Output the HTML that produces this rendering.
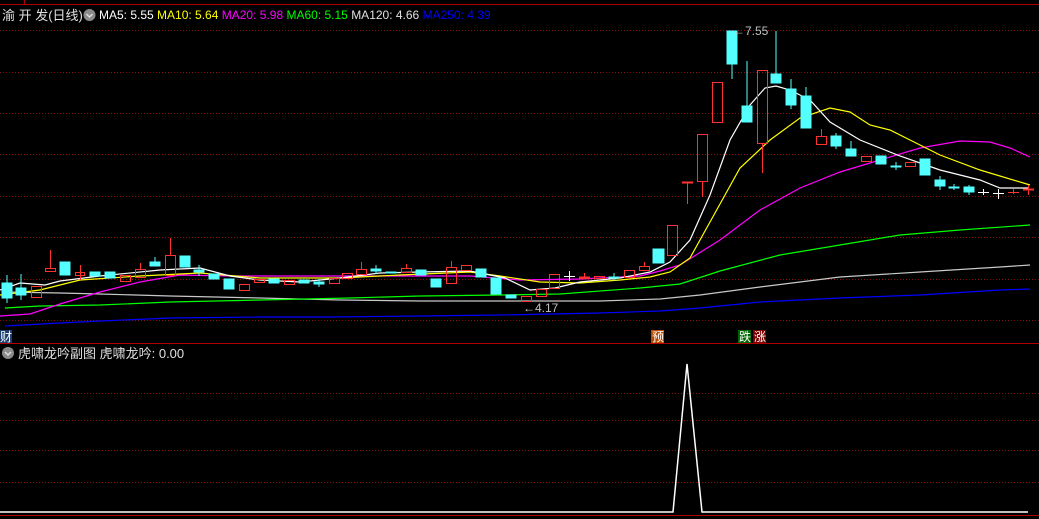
<!DOCTYPE html>
<html><head><meta charset="utf-8"><style>
html,body{margin:0;padding:0;background:#000;width:1039px;height:519px;overflow:hidden}
svg{display:block}
text{font-family:"Liberation Sans","Noto Sans CJK SC",sans-serif}
</style></head><body>
<svg width="1039" height="519" viewBox="0 0 1039 519" xmlns="http://www.w3.org/2000/svg">
<rect width="1039" height="519" fill="#000"/>
<g stroke="#8a1010" stroke-width="1" stroke-dasharray="1,2">
<line x1="0" y1="30.5" x2="1039" y2="30.5"/><line x1="0" y1="72.5" x2="1039" y2="72.5"/>
<line x1="0" y1="113.5" x2="1039" y2="113.5"/><line x1="0" y1="154.5" x2="1039" y2="154.5"/>
<line x1="0" y1="196.5" x2="1039" y2="196.5"/><line x1="0" y1="237.5" x2="1039" y2="237.5"/>
<line x1="0" y1="279.5" x2="1039" y2="279.5"/><line x1="0" y1="320.5" x2="1039" y2="320.5"/>
<line x1="0" y1="393.5" x2="1039" y2="393.5"/><line x1="0" y1="420.5" x2="1039" y2="420.5"/>
<line x1="0" y1="450.5" x2="1039" y2="450.5"/><line x1="0" y1="482.5" x2="1039" y2="482.5"/>
</g>
<line x1="0" y1="4.5" x2="1039" y2="4.5" stroke="#b00000"/>
<line x1="24.5" y1="0" x2="24.5" y2="4" stroke="#b00000"/>
<line x1="0" y1="343.5" x2="1039" y2="343.5" stroke="#b00000"/>
<line x1="0" y1="515.5" x2="1039" y2="515.5" stroke="#b00000"/>

<g fill="none" stroke-width="1.2">
<polyline stroke="#0000ff" points="5,326 60,323 100,321 170,318 260,317 330,317 420,316 500,315 600,313 660,311 700,308 760,302 840,298 920,295 1000,290 1030,289"/>
<polyline stroke="#c8c8c8" points="5,292 60,293 100,294 170,296 260,298 340,300 420,301 500,301 600,301 660,299 700,295 760,287 840,277 920,272 1000,267 1030,265"/>
<polyline stroke="#00ff00" points="5,308 40,306 100,305 170,302 260,300 350,298 420,296 500,295 560,294 640,288 680,284 720,271 780,255 840,245 900,235 960,230 1030,225"/>
<polyline stroke="#ff00ff" points="0,316 30,314 60,304 100,292 140,282 180,275 230,276 300,276 400,276 470,276 520,280 580,279 640,276 660,271 680,265 720,240 760,210 800,188 840,172 880,160 920,148 960,141 990,142 1010,148 1030,157"/>
<polyline stroke="#ffff00" points="0,295 40,290 80,280 140,276 200,273 260,278 340,278 400,275 470,272 500,276 540,282 580,283 620,280 650,277 670,272 690,258 710,222 740,168 770,140 800,118 830,108 850,112 870,125 890,130 910,140 940,155 980,170 1030,185"/>
<polyline stroke="#ffffff" points="0,290 20,283 45,285 60,281 100,276 160,270 200,268 230,276 260,280 300,282 340,278 380,273 420,272 470,271 505,278 530,290 555,288 580,282 620,278 650,272 670,262 690,240 710,195 730,140 750,105 765,88 776,86 790,90 810,100 830,122 860,140 900,156 940,170 980,180 1000,188 1028,188"/>
</g>

<g stroke-width="1">
<g fill="#54ffff" stroke="#54ffff">
<line x1="7" y1="275" x2="7" y2="303"/><rect x="2" y="283" width="10" height="15"/>
<line x1="21" y1="274" x2="21" y2="300"/><rect x="16" y="288" width="10" height="7"/>
<rect x="60" y="262" width="10" height="13"/>
<rect x="90" y="272" width="10" height="4"/>
<rect x="105" y="272" width="10" height="6"/>
<line x1="155" y1="257" x2="155" y2="266"/><rect x="150" y="262" width="10" height="4"/>
<rect x="180" y="256" width="10" height="11"/>
<line x1="199" y1="265" x2="199" y2="276"/><rect x="194" y="270" width="10" height="2"/>
<rect x="209" y="274" width="10" height="5"/>
<rect x="224" y="279" width="10" height="10"/>
<rect x="269" y="279" width="10" height="4"/>
<rect x="299" y="280" width="10" height="3"/>
<line x1="319" y1="279" x2="319" y2="287"/><rect x="314" y="282" width="10" height="2"/>
<line x1="376" y1="265" x2="376" y2="274"/><rect x="371" y="269" width="10" height="2"/>
<rect x="386" y="272" width="10" height="1"/>
<rect x="416" y="270" width="10" height="5"/>
<rect x="431" y="279" width="10" height="8"/>
<rect x="476" y="269" width="10" height="8"/>
<rect x="491" y="278" width="10" height="16"/>
<rect x="506" y="295" width="10" height="3"/>
<line x1="614" y1="273" x2="614" y2="281"/><rect x="609" y="277" width="10" height="1"/>
<rect x="653" y="249" width="11" height="14"/>
<line x1="732" y1="31" x2="732" y2="79"/><rect x="727" y="31" width="10" height="33"/>
<line x1="747" y1="61" x2="747" y2="122"/><rect x="742" y="106" width="10" height="16"/>
<line x1="776" y1="31" x2="776" y2="83"/><rect x="771" y="74" width="10" height="9"/>
<line x1="791" y1="79" x2="791" y2="109"/><rect x="786" y="89" width="10" height="16"/>
<line x1="806" y1="87" x2="806" y2="128"/><rect x="801" y="96" width="10" height="32"/>
<line x1="836" y1="133" x2="836" y2="149"/><rect x="831" y="136" width="10" height="10"/>
<line x1="851" y1="141" x2="851" y2="156"/><rect x="846" y="149" width="10" height="7"/>
<rect x="876" y="156" width="10" height="8"/>
<line x1="896" y1="162" x2="896" y2="170"/><rect x="891" y="166" width="10" height="1"/>
<rect x="920" y="159" width="10" height="16"/>
<line x1="940" y1="176" x2="940" y2="190"/><rect x="935" y="180" width="10" height="6"/>
<line x1="954" y1="184" x2="954" y2="190"/><rect x="949" y="187" width="10" height="1"/>
<line x1="969" y1="185" x2="969" y2="195"/><rect x="964" y="187" width="10" height="5"/>
</g>
<g fill="none" stroke="#ff3232">
<rect x="31.5" y="286.5" width="10" height="11"/>
<line x1="50.5" y1="250" x2="50.5" y2="268"/><rect x="45.5" y="268.5" width="10" height="3"/>
<line x1="80.5" y1="265" x2="80.5" y2="280"/><rect x="75.5" y="272.5" width="9" height="3"/>
<rect x="120.5" y="275.5" width="10" height="6"/>
<line x1="140.5" y1="263" x2="140.5" y2="269"/><rect x="135.5" y="269.5" width="10" height="8"/>
<line x1="170.5" y1="238" x2="170.5" y2="255"/><rect x="165.5" y="255.5" width="10" height="20"/>
<rect x="239.5" y="284.5" width="10" height="6"/>
<rect x="254.5" y="279.5" width="10" height="3"/>
<rect x="284.5" y="280.5" width="10" height="4"/>
<rect x="329.5" y="278.5" width="10" height="5"/>
<rect x="342.5" y="273.5" width="10" height="5"/>
<line x1="361.5" y1="262" x2="361.5" y2="269"/><rect x="356.5" y="269.5" width="10" height="5"/>
<line x1="406.5" y1="264" x2="406.5" y2="268"/><rect x="401.5" y="268.5" width="10" height="4"/>
<line x1="451.5" y1="261" x2="451.5" y2="267"/><rect x="446.5" y="267.5" width="10" height="16"/>
<rect x="461.5" y="265.5" width="10" height="5"/>
<rect x="521.5" y="296.5" width="10" height="5"/>
<rect x="536.5" y="289.5" width="10" height="7"/>
<rect x="549.5" y="274.5" width="10" height="14"/>
<line x1="584.5" y1="273" x2="584.5" y2="278"/><rect x="579.5" y="277" width="10" height="1.5" fill="#ff3232"/>
<rect x="594.5" y="276.5" width="10" height="2"/>
<rect x="624.5" y="270.5" width="10" height="7"/>
<line x1="644.5" y1="262" x2="644.5" y2="266"/><rect x="639.5" y="266.5" width="10" height="4"/>
<rect x="667.5" y="225.5" width="10" height="30"/>
<line x1="687.5" y1="182" x2="687.5" y2="204"/><line x1="682" y1="182.5" x2="693" y2="182.5" stroke-width="2"/>
<line x1="702.5" y1="181" x2="702.5" y2="197"/><rect x="697.5" y="134.5" width="10" height="47"/>
<rect x="712.5" y="82.5" width="10" height="40"/>
<line x1="762.5" y1="143" x2="762.5" y2="173"/><rect x="757.5" y="70.5" width="10" height="73"/>
<line x1="821.5" y1="129" x2="821.5" y2="136"/><rect x="816.5" y="136.5" width="10" height="8"/>
<rect x="861.5" y="156.5" width="10" height="5"/>
<rect x="905.5" y="162.5" width="10" height="4"/>
<line x1="1013.5" y1="189" x2="1013.5" y2="194"/><line x1="1008" y1="192.5" x2="1019" y2="192.5"/>
<line x1="1028.5" y1="185" x2="1028.5" y2="195"/><line x1="1023" y1="189.5" x2="1034" y2="189.5" stroke-width="2"/>
</g>
<g stroke="#ffffff">
<line x1="569.5" y1="271" x2="569.5" y2="281"/><line x1="564" y1="276.5" x2="575" y2="276.5"/>
<line x1="983.5" y1="189" x2="983.5" y2="195"/><line x1="978" y1="192.5" x2="989" y2="192.5"/>
<line x1="998.5" y1="189" x2="998.5" y2="199"/><line x1="993" y1="193.5" x2="1004" y2="193.5"/>
</g>
</g>

<text x="733" y="35" fill="#c0c0c0" font-size="12">←7.55</text>
<text x="523" y="312" fill="#c0c0c0" font-size="12">←4.17</text>

<text x="2" y="20" fill="#e0e0e0" font-size="13">渝 开 发(日线)</text>
<circle cx="89.5" cy="15" r="6" fill="#8a8a8a"/>
<path d="M86.5 14 L89.5 17 L92.5 14" stroke="#ddd" stroke-width="1.5" fill="none"/>
<text x="99" y="19" font-size="12"><tspan fill="#ffffff">MA5: 5.55 </tspan><tspan fill="#ffff00">MA10: 5.64 </tspan><tspan fill="#ff00ff">MA20: 5.98 </tspan><tspan fill="#00ff00">MA60: 5.15 </tspan><tspan fill="#e0e0e0">MA120: 4.66 </tspan><tspan fill="#0000ff">MA250: 4.39</tspan></text>

<rect x="0" y="330" width="12" height="13" fill="#1a3d6e"/>
<text x="0" y="341" fill="#ffffff" font-size="12">财</text>
<rect x="651" y="330" width="13" height="13" fill="#b84a00"/>
<text x="652" y="341" fill="#ffffff" font-size="12">预</text>
<rect x="738" y="330" width="13" height="13" fill="#006600"/>
<text x="739" y="341" fill="#ffffff" font-size="12">跌</text>
<rect x="753" y="330" width="13" height="13" fill="#7a0000"/>
<text x="754" y="341" fill="#ffffff" font-size="12">涨</text>

<circle cx="8" cy="353" r="6" fill="#8a8a8a"/>
<path d="M5 352 L8 355 L11 352" stroke="#ddd" stroke-width="1.5" fill="none"/>
<text x="18" y="358" fill="#e0e0e0" font-size="13">虎啸龙吟副图  虎啸龙吟: 0.00</text>

<polyline fill="none" stroke="#ffffff" stroke-width="1.5" points="0,512 673,512 687,364 702,512 1028,512"/>
</svg>
</body></html>
